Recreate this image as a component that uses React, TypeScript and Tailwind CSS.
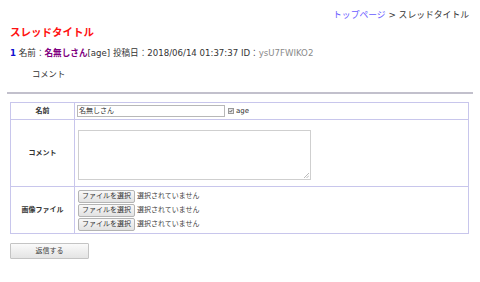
import React from 'react';

const font = { fontFamily: '"DejaVu Sans", "Noto Sans CJK JP", sans-serif' };

const FileRow: React.FC = () => (
    <div className="flex items-center h-[13px]">
        <span className="w-[57px] h-[13px] flex items-center justify-center border border-[#b4b4b4] rounded-[2px] bg-gradient-to-b from-[#f8f8f8] to-[#e2e2e2] text-[7px] text-[#333]">
            ファイルを選択
        </span>
        <span className="ml-[2px] text-[7px] text-[#444]">選択されていません</span>
    </div>
);

const App: React.FC = () => {
    return (
        <div className="w-[480px] h-[282px] bg-white text-[#333] overflow-hidden" style={font}>
            {/* breadcrumb */}
            <div className="mt-[9px] h-[12px] leading-[12px] text-[8.8px] text-right pr-[11px]">
                <span className="text-[#6a5cff]">トップページ</span>
                <span> &gt; スレッドタイトル</span>
            </div>

            <h1 className="mt-[4px] h-[14px] leading-[14px] pl-[10px] text-[10.5px] font-bold text-[#ff1010]">スレッドタイトル</h1>

            <div className="mt-[8px] h-[12px] leading-[12px] pl-[10px] text-[8.6px] whitespace-nowrap">
                <span className="font-bold text-[#1010d0]">1</span> 名前：
                <span className="font-bold text-[#800080]">名無しさん</span>[age] 投稿日：2018/06/14 01:37:37 ID：
                <span className="text-[#8a8a8a]">ysU7FWIKO2</span>
            </div>

            <div className="mt-[9px] h-[12px] leading-[12px] pl-[32px] text-[8.3px]">コメント</div>

            <div className="mt-[12px] mx-[7px] h-[2px] bg-[#c2c0cc]"></div>

            <table className="mt-[8px] ml-[10px] w-[459px] border-collapse text-[7px]">
                <tbody>
                    <tr className="h-[17px]">
                        <th className="w-[64px] border border-[#c8c6ec] font-bold text-center">名前</th>
                        <td className="border border-[#c8c6ec] px-[2px]">
                            <div className="flex items-center">
                                <div className="w-[148px] h-[12px] border border-[#b8b8b8] leading-[10px] pl-[1px] text-[7px]">名無しさん</div>
                                <span className="ml-[3px] w-[6px] h-[6px] border border-[#999] bg-[#e8e8e8] flex items-center justify-center">
                                    <svg viewBox="0 0 8 8" className="w-[6px] h-[6px]">
                                        <path d="M1 4.2 L3 6.2 L7 1.5" stroke="#222" strokeWidth="1.4" fill="none" />
                                    </svg>
                                </span>
                                <span className="ml-[2px] text-[7px]">age</span>
                            </div>
                        </td>
                    </tr>
                    <tr className="h-[67px]">
                        <th className="border border-[#c8c6ec] font-bold text-center">コメント</th>
                        <td className="border border-[#c8c6ec] px-[3px]">
                            <div className="relative w-[233px] h-[50px] border border-[#cfcfcf] bg-white mt-[3px]">
                                <svg viewBox="0 0 6 6" className="absolute right-[1px] bottom-[1px] w-[5px] h-[5px]">
                                    <path d="M0 6 L6 0 M3 6 L6 3" stroke="#999" strokeWidth="0.8" />
                                </svg>
                            </div>
                        </td>
                    </tr>
                    <tr className="h-[47px]">
                        <th className="border border-[#c8c6ec] font-bold text-center">画像ファイル</th>
                        <td className="border border-[#c8c6ec] px-[3px]">
                            <div className="flex flex-col gap-[1px]">
                                <FileRow />
                                <FileRow />
                                <FileRow />
                            </div>
                        </td>
                    </tr>
                </tbody>
            </table>

            <button className="mt-[9px] ml-[10px] w-[79px] h-[16px] border border-[#c4c4c4] rounded-[1px] bg-gradient-to-b from-[#fafafa] to-[#e4e4e4] text-[7px] text-[#444] flex items-center justify-center">
                返信する
            </button>
        </div>
    );
};

export default App;
